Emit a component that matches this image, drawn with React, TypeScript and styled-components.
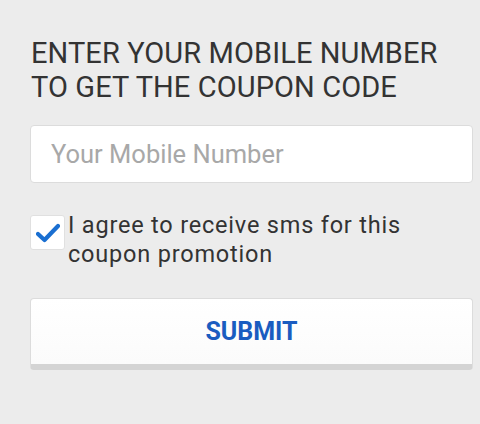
import React, { useState } from 'react'
import styled, { createGlobalStyle } from 'styled-components'

const GlobalStyle = createGlobalStyle`
  html, body {
    margin: 0;
    padding: 0;
    background: #ececec;
    font-family: Roboto, 'Liberation Sans', sans-serif;
  }
`

export default function App() {
  const [agreed, setAgreed] = useState(true)

  return (
    <Page>
      <GlobalStyle />
      <Title>ENTER YOUR MOBILE NUMBER TO GET THE COUPON CODE</Title>

      <PhoneInput type="tel" placeholder="Your Mobile Number" />

      <AgreeRow>
        <CheckBox checked={agreed} onClick={() => setAgreed(!agreed)}>
          {agreed && (
            <svg width="24" height="20" viewBox="0 0 24 20">
              <path d="M2 11 L8.5 17 L22 3" fill="none" stroke="#1a6fd1" strokeWidth="4.2" strokeLinecap="round" strokeLinejoin="round" />
            </svg>
          )}
        </CheckBox>
        <AgreeText>I agree to receive sms for this coupon promotion</AgreeText>
      </AgreeRow>

      <SubmitButton>SUBMIT</SubmitButton>
    </Page>
  )
}

const Page = styled.div`
  display: flex;
  flex-direction: column;
  padding: 36px 7px 0 30px;
  width: 480px;
  height: 424px;
  box-sizing: border-box;
`

const Title = styled.div`
  font-size: 29px;
  letter-spacing: 0.1px;
  line-height: 34px;
  color: #333;
  padding-left: 1px;
  margin-bottom: 21px;
`

const PhoneInput = styled.input`
  box-sizing: border-box;
  height: 58px;
  width: 443px;
  border: 1.5px solid #dcdcdc;
  border-radius: 4px;
  background: #fff;
  padding: 0 20px;
  font-family: Roboto, 'Liberation Sans', sans-serif;
  font-size: 25.5px;
  color: #333;
  outline: none;

  &::placeholder {
    color: #a8a8a8;
  }
`

const AgreeRow = styled.div`
  display: flex;
  align-items: flex-start;
  margin-top: 31px;
`

const CheckBox = styled.div<{ checked: boolean }>`
  box-sizing: border-box;
  flex: none;
  width: 35px;
  height: 35px;
  margin-top: 1px;
  border: 1.5px solid #e0e0e0;
  border-radius: 3px;
  background: #fff;
  display: flex;
  align-items: center;
  justify-content: center;
  cursor: pointer;
`

const AgreeText = styled.div`
  max-width: 360px;
  font-size: 23.5px;
  letter-spacing: 0.8px;
  line-height: 29px;
  color: #333;
  margin-left: 3px;
  margin-top: -3px;
`

const SubmitButton = styled.button`
  box-sizing: border-box;
  margin-top: 29px;
  width: 443px;
  height: 72px;
  border: 1.5px solid #dcdcdc;
  border-bottom: 6px solid #d4d4d4;
  border-radius: 4px;
  background: linear-gradient(#fff, #fbfbfb);
  color: #1a5cc0;
  font-family: Roboto, 'Liberation Sans', sans-serif;
  font-weight: 700;
  font-size: 25px;
  cursor: pointer;
`
